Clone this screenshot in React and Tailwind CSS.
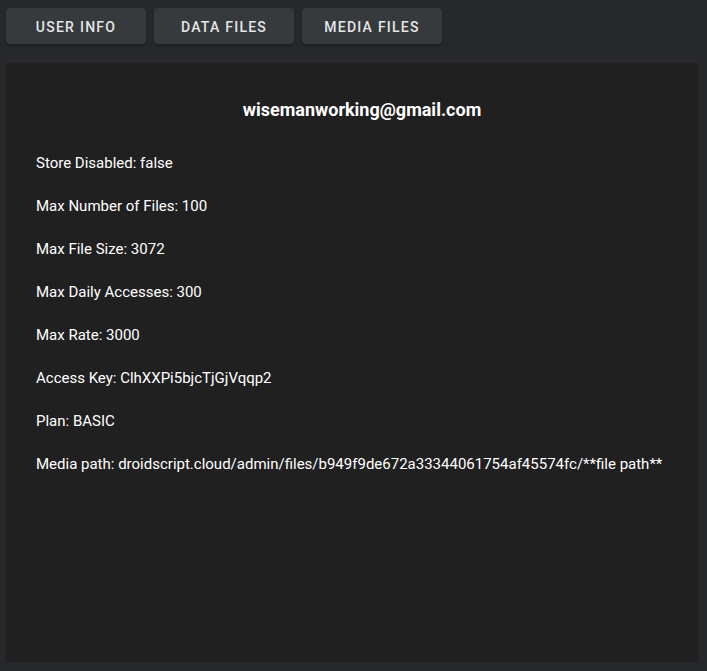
export default function App() {
  const rows = [
    "Store Disabled: false",
    "Max Number of Files: 100",
    "Max File Size: 3072",
    "Max Daily Accesses: 300",
    "Max Rate: 3000",
    "Access Key: ClhXXPi5bjcTjGjVqqp2",
    "Plan: BASIC",
    "Media path: droidscript.cloud/admin/files/b949f9de672a33344061754af45574fc/**file path**",
  ];
  return (
    <div className="w-[707px] h-[671px] bg-[#27282c] px-[6px] pt-[8px] flex flex-col" style={{ fontFamily: "Roboto, 'Liberation Sans', sans-serif" }}>
      <div className="flex gap-[8px]">
        {["USER INFO", "DATA FILES", "MEDIA FILES"].map((t) => (
          <button key={t} className="w-[140px] h-[36px] pt-[2px] rounded-[4px] bg-[#363a3d] text-[#e4e6e8] text-[14px] font-medium tracking-[1.25px] shadow-[0_2px_2px_rgba(0,0,0,0.25)]">
            {t}
          </button>
        ))}
      </div>
      <div className="mt-[19px] w-[692px] h-[599px] bg-[#202020] px-[30px] pt-[35px]">
        <div className="pl-[20px] text-center text-white text-[18px] font-bold leading-[24px]">wisemanworking@gmail.com</div>
        <div className="mt-[31px] flex flex-col gap-[23px]">
          {rows.map((r) => (
            <div key={r} className="text-white text-[15px] leading-[20px]">{r}</div>
          ))}
        </div>
      </div>
    </div>
  );
}
